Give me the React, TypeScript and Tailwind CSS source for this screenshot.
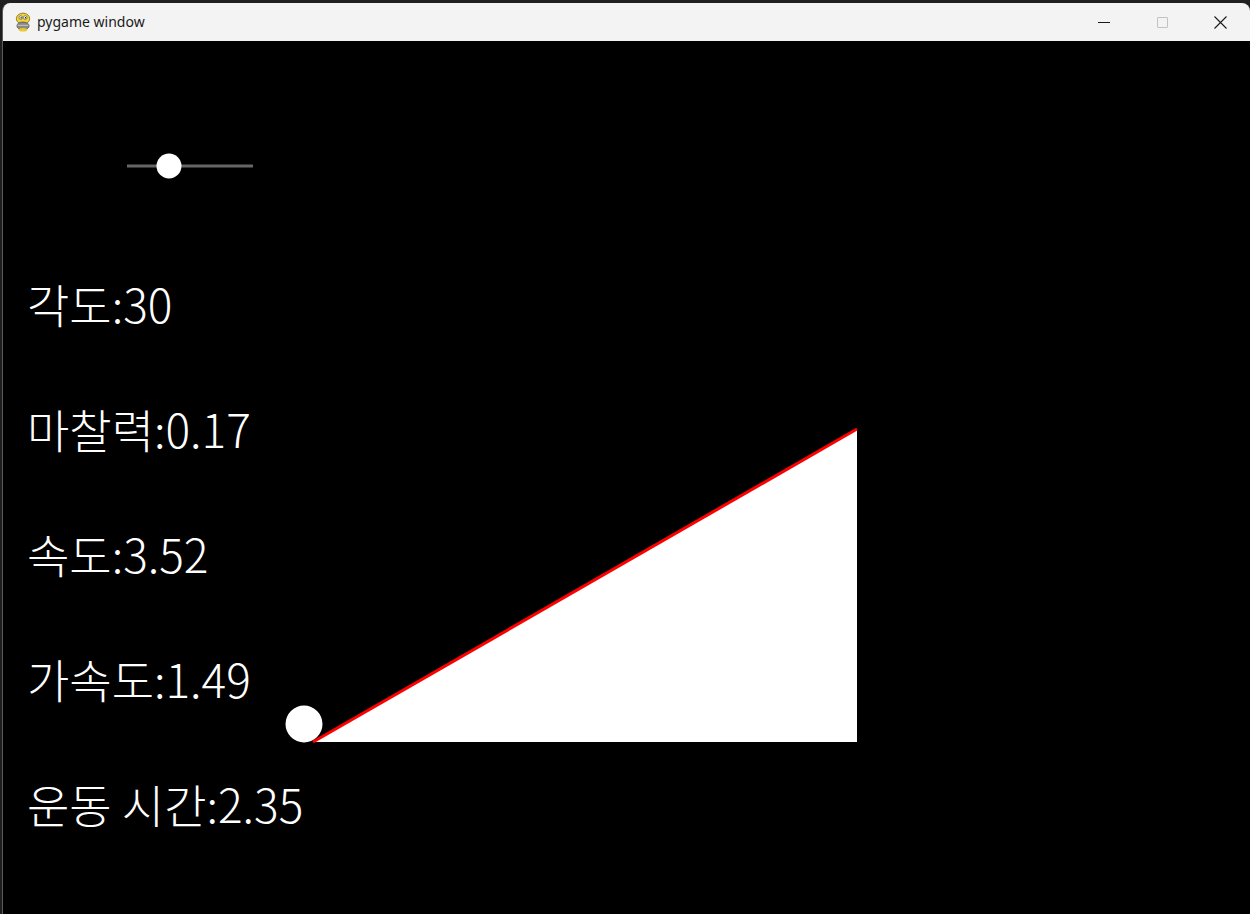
import React from "react";

const lines = ["각도:30", "마찰력:0.17", "속도:3.52", "가속도:1.49", "운동 시간:2.35"];

function PygameIcon() {
  return (
    <svg width="20" height="20" viewBox="0 0 18 18">
      <ellipse cx="9" cy="6" rx="6" ry="5" fill="#f2d43a" stroke="#8a7420" strokeWidth="0.8" />
      <circle cx="7" cy="5" r="1.6" fill="#fff" stroke="#333" strokeWidth="0.5" />
      <circle cx="11" cy="5" r="1.6" fill="#fff" stroke="#333" strokeWidth="0.5" />
      <circle cx="7.3" cy="5.2" r="0.6" fill="#111" />
      <circle cx="11.3" cy="5.2" r="0.6" fill="#111" />
      <ellipse cx="9" cy="12.5" rx="5.5" ry="3.5" fill="#8a8a8a" stroke="#444" strokeWidth="0.6" />
      <path d="M4 12 h10" stroke="#ccc" strokeWidth="0.8" />
      <ellipse cx="9" cy="16" rx="4" ry="1.6" fill="#e8c930" />
    </svg>
  );
}

export default function App() {
  return (
    <div className="w-[1250px] h-[914px] bg-[#1e1e1e] flex flex-col overflow-hidden">
      <div className="h-[3px] shrink-0 bg-[#202020]" />
      <div className="flex-1 flex flex-col ml-[2px] rounded-tl-[8px] rounded-tr-[8px] overflow-hidden border-l border-[#5a5a5a]">
        <div className="h-[38px] shrink-0 bg-[#f3f3f3] flex items-center">
          <div className="ml-[10px] w-[20px] flex items-center justify-center">
            <PygameIcon />
          </div>
          <span className="ml-[4px] text-[14px] text-[#1a1a1a] font-['Noto_Sans','Inter',sans-serif] leading-none">pygame window</span>
          <div className="ml-auto flex items-center h-full">
            <div className="w-[58px] h-full flex items-center justify-center">
              <div className="w-[12px] h-[1px] bg-[#1a1a1a]" />
            </div>
            <div className="w-[58px] h-full flex items-center justify-center">
              <div className="w-[11px] h-[11px] border border-[#c2c2c2] rounded-[1px]" />
            </div>
            <div className="w-[58px] h-full flex items-center justify-center mr-[1px]">
              <svg width="13" height="13" viewBox="0 0 13 13">
                <path d="M0.5 0.5 L12.5 12.5 M12.5 0.5 L0.5 12.5" stroke="#1a1a1a" strokeWidth="1.1" />
              </svg>
            </div>
          </div>
        </div>
        <div className="flex-1 bg-black relative">
          <svg className="absolute inset-0" width="1247" height="873" viewBox="3 41 1247 873">
            <line x1="127" y1="166" x2="253" y2="166" stroke="#666666" strokeWidth="3" />
            <circle cx="169" cy="166" r="12.5" fill="#ffffff" />
            <polygon points="313,742 857,742 857,429" fill="#ffffff" />
            <line x1="313" y1="742" x2="857" y2="429" stroke="#ff0000" strokeWidth="3" />
            <circle cx="304" cy="724" r="18.5" fill="#ffffff" />
          </svg>
          <div className="relative flex flex-col gap-[79px] pt-[239px] pl-[24px] text-white text-[46px] leading-none font-light font-['Noto_Sans_CJK_KR','Noto_Sans',sans-serif]">
            {lines.map((t) => (
              <div key={t} className="h-[46px]">{t}</div>
            ))}
          </div>
        </div>
      </div>
    </div>
  );
}
